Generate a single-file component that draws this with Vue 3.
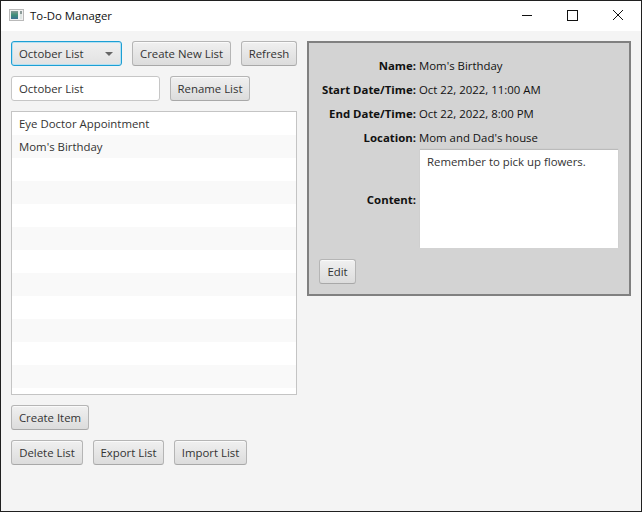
<script setup>
const rows = ['Eye Doctor Appointment', "Mom's Birthday", '', '', '', '', '', '', '', '', '', '']
const details = [
  { label: 'Name:', value: "Mom's Birthday" },
  { label: 'Start Date/Time:', value: 'Oct 22, 2022, 11:00 AM' },
  { label: 'End Date/Time:', value: 'Oct 22, 2022, 8:00 PM' },
  { label: 'Location:', value: "Mom and Dad's house" }
]
</script>

<template>
  <div class="window">
    <header class="titlebar">
      <svg class="app-icon" width="15" height="12" viewBox="0 0 15 12">
        <defs>
          <linearGradient id="pic" x1="0" y1="0" x2="0" y2="1">
            <stop offset="0" stop-color="#8a9a98" />
            <stop offset="0.5" stop-color="#3f8f78" />
            <stop offset="1" stop-color="#3c6f94" />
          </linearGradient>
        </defs>
        <rect x="0.5" y="0.5" width="14" height="11" fill="#f1f1f1" stroke="#b9b9b9" />
        <rect x="2" y="2" width="7" height="8" fill="url(#pic)" />
        <rect x="11" y="2" width="2" height="3" fill="#8d9c9a" />
        <rect x="11" y="5" width="2" height="5" fill="#dfe6e4" />
      </svg>
      <span class="title">To-Do Manager</span>
      <div class="controls">
        <svg width="46" height="30" viewBox="0 0 46 30"><path d="M19 14.5h10" stroke="#111" fill="none" /></svg>
        <svg width="46" height="30" viewBox="0 0 46 30"><rect x="18.5" y="9.5" width="10" height="10" stroke="#111" fill="none" /></svg>
        <svg width="46" height="30" viewBox="0 0 46 30"><path d="M18 9l10 10M28 9l-10 10" stroke="#111" fill="none" /></svg>
      </div>
    </header>

    <main class="content">
      <section class="left">
        <div class="row">
          <div class="combo">
            <span>October List</span>
            <i class="arrow"></i>
          </div>
          <button class="btn w-new">Create New List</button>
          <button class="btn w-refresh">Refresh</button>
        </div>
        <div class="row">
          <input class="field" value="October List" />
          <button class="btn w-rename">Rename List</button>
        </div>
        <ul class="list">
          <li v-for="(row, i) in rows" :key="i">{{ row }}</li>
        </ul>
        <div class="row">
          <button class="btn w-item">Create Item</button>
        </div>
        <div class="row">
          <button class="btn w-delete">Delete List</button>
          <button class="btn w-export">Export List</button>
          <button class="btn w-import">Import List</button>
        </div>
      </section>

      <section class="panel">
        <div class="details">
          <template v-for="d in details" :key="d.label">
            <b class="label raised">{{ d.label }}</b>
            <span class="value raised">{{ d.value }}</span>
          </template>
          <b class="label">Content:</b>
          <div class="note">Remember to pick up flowers.</div>
        </div>
        <button class="btn w-edit">Edit</button>
      </section>
    </main>
  </div>
</template>

<style>
html, body {
  margin: 0;
  background: #f4f4f4;
}
</style>

<style scoped>
.window {
  box-sizing: border-box;
  width: 642px;
  height: 512px;
  border: 1px solid #202020;
  background: #f4f4f4;
  font-family: "Open Sans", "Noto Sans", sans-serif;
  font-size: 11.4px;
  color: #333;
  overflow: hidden;
}

.titlebar {
  box-sizing: border-box;
  display: flex;
  align-items: center;
  height: 30px;
  padding: 0 0 2px 8px;
  background: #fff;
  color: #111;
}

.app-icon {
  margin-right: 6px;
}

.controls {
  display: flex;
  align-self: flex-start;
  margin-left: auto;
}

.content {
  display: flex;
  gap: 10px;
  padding: 10px;
}

.left {
  display: flex;
  flex-direction: column;
  gap: 10px;
  width: 286px;
}

.row {
  display: flex;
  gap: 10px;
}

.btn {
  box-sizing: border-box;
  height: 25px;
  padding: 0;
  border: 1px solid #b5b5b5;
  border-bottom-color: #a8a8a8;
  border-radius: 3px;
  background: linear-gradient(#f0f0f0, #dcdcdc);
  box-shadow: inset 0 1px 0 #fafafa;
  font: inherit;
  color: #333;
}

.w-new { width: 99px; }
.w-refresh { width: 56px; }
.w-rename { width: 80px; }
.w-item { width: 78px; }
.w-delete { width: 72px; }
.w-export { width: 71px; }
.w-import { width: 73px; }
.w-edit { width: 37px; margin-left: 10px; }

.combo {
  box-sizing: border-box;
  display: flex;
  align-items: center;
  justify-content: space-between;
  width: 111px;
  height: 25px;
  padding: 0 8px 0 7px;
  border: 1px solid #1c9fd4;
  border-radius: 3px;
  background: linear-gradient(#f0f0f0, #e2e2e2);
  box-shadow: inset 0 0 0 1px #b4e0f2;
}

.arrow {
  width: 0;
  height: 0;
  border-left: 4px solid transparent;
  border-right: 4px solid transparent;
  border-top: 4px solid #666;
}

.field {
  box-sizing: border-box;
  width: 149px;
  height: 25px;
  padding: 0 7px;
  border: 1px solid #c6c6c6;
  border-radius: 3px;
  background: #fff;
  font: inherit;
  color: #333;
  outline: none;
}

.list {
  box-sizing: border-box;
  height: 284px;
  margin: 0;
  padding: 0;
  list-style: none;
  border: 1px solid #c4c4c4;
  background: #fff;
}

.list li {
  box-sizing: border-box;
  height: 23px;
  padding-left: 7px;
  line-height: 23px;
}

.list li:nth-child(even) {
  background: #f9f9f9;
}

.panel {
  box-sizing: border-box;
  width: 324px;
  height: 255px;
  border: 2px solid #808080;
  background: #d3d3d3;
}

.details {
  display: grid;
  grid-template-columns: 107px 199px;
  grid-template-rows: repeat(4, 24px) 98px;
  column-gap: 3px;
  align-items: center;
  padding-top: 11px;
  margin-bottom: 11px;
  color: #111;
}

.label {
  text-align: right;
}

.raised {
  margin-bottom: 2px;
}

.note {
  box-sizing: border-box;
  width: 198px;
  height: 98px;
  margin-left: 1px;
  padding: 4px 7px;
  background: #fff;
  box-shadow: 0 -1px 1px #bbb;
  color: #333;
}
</style>
